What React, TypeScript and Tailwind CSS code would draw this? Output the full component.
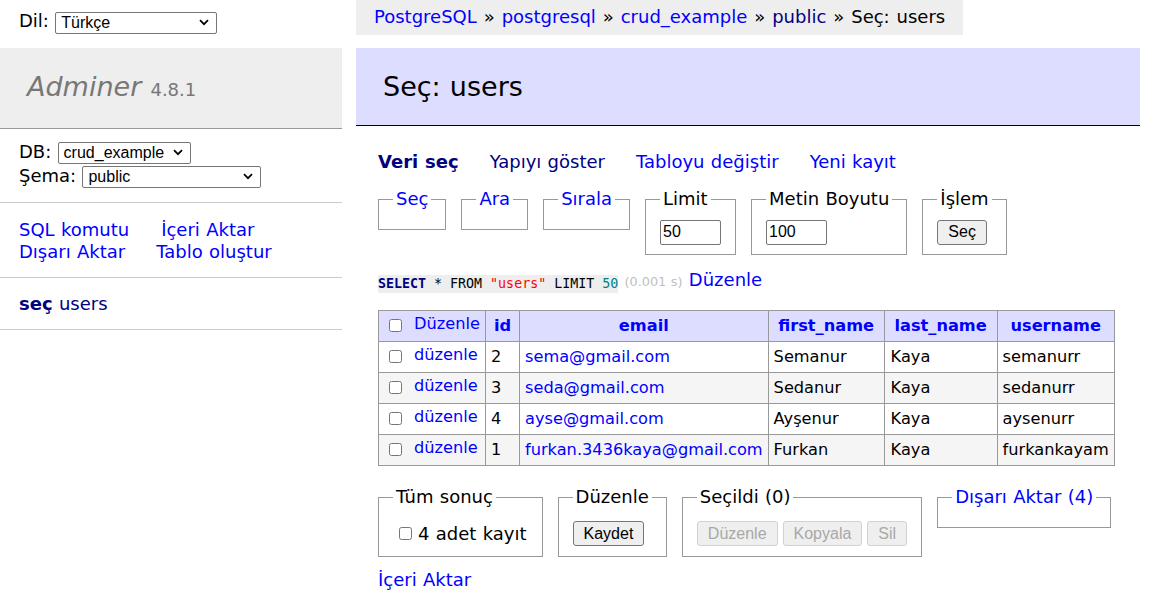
import type { ReactNode } from 'react'

const ui = "font-['Liberation_Sans',Arial,sans-serif] text-[16px]"

function Select({ value, className }: { readonly value: string; readonly className: string }) {
  return (
    <span className={`relative inline-block align-middle ${className}`}>
      <select
        defaultValue={value}
        className={`h-[22px] w-full appearance-none rounded-[2px] border border-[#767676] bg-white pl-[5px] leading-[20px] text-black ${ui}`}
      >
        <option>{value}</option>
      </select>
      <svg
        className="pointer-events-none absolute right-[8px] top-[8px]"
        width="10"
        height="7"
        viewBox="0 0 10 7"
      >
        <path d="M1 1.2l4 4 4-4" stroke="#000" strokeWidth="1.7" fill="none" />
      </svg>
    </span>
  )
}

function Box({ legend, children }: { readonly legend: ReactNode; readonly children?: ReactNode }) {
  return (
    <fieldset className="border border-[#999] px-[14px] py-[9px]">
      <legend className="px-[3px] leading-[22.5px]">{legend}</legend>
      {children}
    </fieldset>
  )
}

function Btn({ children, disabled }: { readonly children: ReactNode; readonly disabled?: boolean }) {
  return (
    <button
      type="button"
      disabled={disabled}
      className={
        disabled
          ? `h-[25px] rounded-[3px] border border-[#d2d2d2] bg-[#efefef] px-[10px] text-[#a8a8a8] ${ui}`
          : `h-[25px] rounded-[3px] border border-[#767676] bg-[#efefef] px-[10px] text-black ${ui}`
      }
    >
      {children}
    </button>
  )
}

const rows = [
  ['2', 'sema@gmail.com', 'Semanur', 'Kaya', 'semanurr'],
  ['3', 'seda@gmail.com', 'Sedanur', 'Kaya', 'sedanurr'],
  ['4', 'ayse@gmail.com', 'Ayşenur', 'Kaya', 'aysenurr'],
  ['1', 'furkan.3436kaya@gmail.com', 'Furkan', 'Kaya', 'furkankayam'],
]

const cols = [
  { name: 'id', w: 'w-[34px]' },
  { name: 'email', w: 'w-[247px]' },
  { name: 'first_name', w: 'w-[116px]' },
  { name: 'last_name', w: 'w-[113px]' },
  { name: 'username', w: 'w-[117px]' },
]

export default function App() {
  return (
    <div className="flex min-h-[611px] bg-white font-['DejaVu_Sans',Verdana,sans-serif] text-[18px] leading-[22.5px] text-black [word-spacing:0.6px]">
      <aside className="w-[342px] shrink-0">
        <div className="h-[48px] pl-[19px] pt-[10px] leading-[22px]">
          Dil: <Select value="Türkçe" className="w-[162px]" />
        </div>
        <h1 className="border-b border-[#999] bg-[#eee] px-[27px] py-[21.6px] text-[27px] leading-[33.75px] text-[#777]">
          <span className="italic">Adminer</span> <span className="text-[18px]">4.8.1</span>
        </h1>
        <div className="border-b border-[#ccc] px-[19px] pb-[13px] pt-[12px]">
          <div className="h-[24px]">
            DB: <Select value="crud_example" className="w-[133px]" />
          </div>
          <div className="h-[24px]">
            Şema: <Select value="public" className="w-[179px]" />
          </div>
        </div>
        <div className="border-b border-[#ccc] px-[19px] pb-[13px] pt-[16px] text-[#0000ff]">
          <div className="flex gap-[32px]">
            <a>SQL komutu</a>
            <a>İçeri Aktar</a>
          </div>
          <div className="flex gap-[31px]">
            <a>Dışarı Aktar</a>
            <a>Tablo oluştur</a>
          </div>
        </div>
        <div className="border-b border-[#ccc] px-[19px] pb-[14px] pt-[15px] text-[#000080]">
          <a className="font-bold">seç</a> <a>users</a>
        </div>
      </aside>

      <main className="flex-1 pl-[14px]">
        <div className="inline-block h-[35px] bg-[#eee] px-[18px] leading-[33px] whitespace-nowrap [word-spacing:1.2px]">
          <a className="text-[#0000ff]">PostgreSQL</a> » <a className="text-[#0000ff]">postgresql</a> »{' '}
          <a className="text-[#0000ff]">crud_example</a> » <a className="text-[#000080]">public</a> » Seç: users
        </div>
        <h2 className="mr-[21px] mt-[13px] border-b border-black bg-[#ddf] px-[27px] py-[21.6px] text-[27px] leading-[33.75px] font-normal">
          Seç: users
        </h2>

        <div className="pl-[22px]">
          <div className="mt-[25px] flex gap-[31px]">
            <a className="font-bold text-[#000080]">Veri seç</a>
            <a className="text-[#000080]">Yapıyı göster</a>
            <a className="text-[#0000ff]">Tabloyu değiştir</a>
            <a className="text-[#0000ff]">Yeni kayıt</a>
          </div>

          <div className="mt-[15px] flex items-start gap-[15px]">
            <Box legend={<a className="text-[#0000ff]">Seç</a>} />
            <Box legend={<a className="text-[#0000ff]">Ara</a>} />
            <Box legend={<a className="text-[#0000ff]">Sırala</a>} />
            <Box legend="Limit">
              <input
                defaultValue="50"
                className={`block h-[25px] w-[61px] rounded-[2px] border border-[#767676] px-[2px] ${ui}`}
              />
            </Box>
            <Box legend="Metin Boyutu">
              <input
                defaultValue="100"
                className={`block h-[25px] w-[61px] rounded-[2px] border border-[#767676] px-[2px] ${ui}`}
              />
            </Box>
            <Box legend="İşlem">
              <Btn>Seç</Btn>
            </Box>
          </div>

          <p className="mt-[14px] whitespace-nowrap">
            <code className="inline-block bg-[#eee] align-[-2px] font-['DejaVu_Sans_Mono',monospace] text-[13.3px] leading-[18px] [word-spacing:0px]">
              <span className="font-bold text-[#000080]">SELECT</span> * FROM{' '}
              <span className="text-[#ff0000]">"users"</span> LIMIT <span className="text-[#008080]">50</span>
            </code>{' '}
            <span className="text-[12.8px] text-[#c0c0c0]">(0.001 s)</span> <a className="text-[#0000ff]">Düzenle</a>
          </p>

          <table className="mt-[17px] border-collapse text-[16.2px] leading-[20px]">
            <thead>
              <tr className="h-[31px] bg-[#ddf]">
                <td className="w-[107px] border border-[#999] px-[5px] whitespace-nowrap">
                  <input type="checkbox" className="ml-[5px] mr-[12px] align-[-1px]" />
                  <a className="relative top-[-2px] text-[#0000ff]">Düzenle</a>
                </td>
                {cols.map((c) => (
                  <th key={c.name} className={`${c.w} border border-[#999] px-[5px] text-center font-bold text-[#0000ff]`}>
                    {c.name}
                  </th>
                ))}
              </tr>
            </thead>
            <tbody>
              {rows.map((r, i) => (
                <tr key={r[0]} className={i % 2 === 1 ? 'h-[31px] bg-[#f5f5f5]' : 'h-[31px]'}>
                  <td className="border border-[#999] px-[5px] whitespace-nowrap">
                    <input type="checkbox" className="ml-[5px] mr-[12px] align-[-1px]" />
                    <a className="relative top-[-2px] text-[#0000ff]">düzenle</a>
                  </td>
                  <td className="border border-[#999] px-[5px]">{r[0]}</td>
                  <td className="border border-[#999] px-[5px] whitespace-nowrap text-[#0000ff]">{r[1]}</td>
                  <td className="border border-[#999] px-[5px]">{r[2]}</td>
                  <td className="border border-[#999] px-[6px]">{r[3]}</td>
                  <td className="border border-[#999] px-[5px]">{r[4]}</td>
                </tr>
              ))}
            </tbody>
          </table>

          <div className="mt-[20px] flex items-start gap-[15px]">
            <Box legend="Tüm sonuç">
              <label className="mt-[3px] flex h-[26px] items-center pl-[6px] pr-[1px]">
                <input type="checkbox" className="mr-[6px] h-[13px] w-[13px]" />4 adet kayıt
              </label>
            </Box>
            <Box legend="Düzenle">
              <div className="mt-[3px] flex h-[26px] items-center">
                <Btn>Kaydet</Btn>
              </div>
            </Box>
            <Box legend="Seçildi (0)">
              <div className="mt-[3px] flex h-[26px] items-center gap-[5px]">
                <Btn disabled>Düzenle</Btn>
                <Btn disabled>Kopyala</Btn>
                <Btn disabled>Sil</Btn>
              </div>
            </Box>
            <Box legend={<a className="text-[#0000ff]">Dışarı Aktar (4)</a>} />
          </div>

          <p className="mt-[12px]">
            <a className="text-[#0000ff]">İçeri Aktar</a>
          </p>
        </div>
      </main>
    </div>
  )
}
